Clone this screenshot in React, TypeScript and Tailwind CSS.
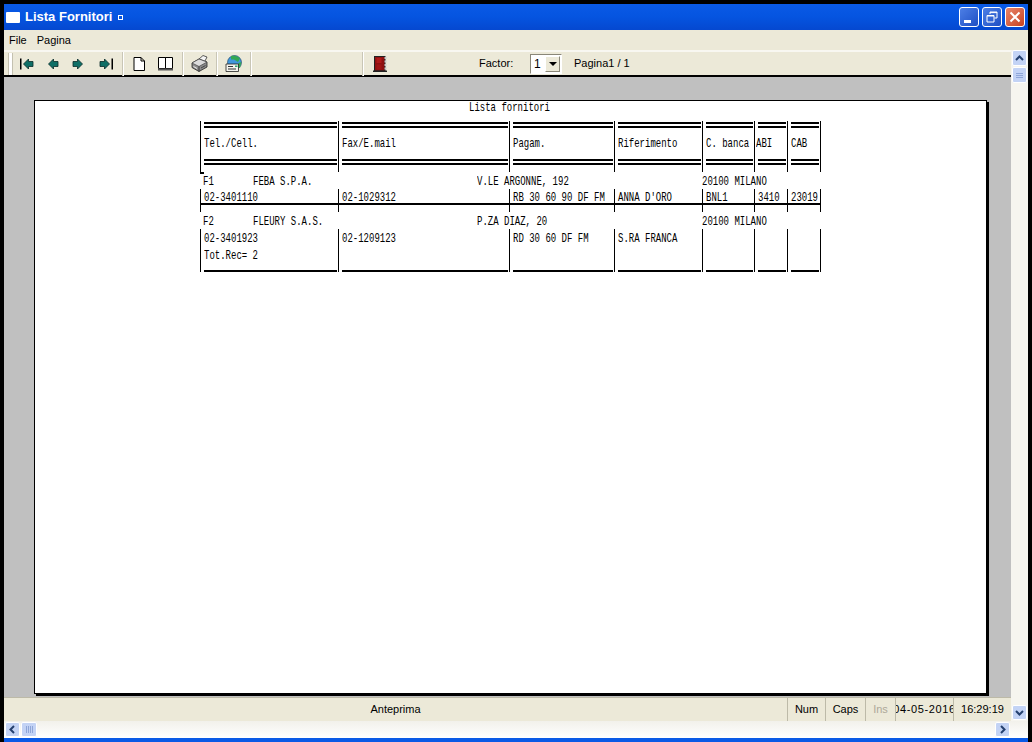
const ui = "[font-family:'Liberation_Sans',Arial,sans-serif]"

const columns = 'grid grid-cols-[138px_171px_105px_88px_52px_33px_33px]'

const headers = ['Tel./Cell.', 'Fax/E.mail', 'Pagam.', 'Riferimento', 'C. banca', 'ABI', 'CAB']
const row1 = ['02-3401110', '02-1029312', 'RB 30 60 90 DF FM', "ANNA D'ORO", 'BNL1', '3410', '23019']
const row2 = ['02-3401923', '02-1209123', 'RD 30 60 DF FM', 'S.RA FRANCA', '', '', '']

// report text: the preview squeezes a fixed pitch font, so it stays narrow and tall
function Print({ children, className }: { children?: React.ReactNode; className?: string }) {
  return (
    <div className={`h-[13px] scale-y-[1.35] whitespace-nowrap font-['Liberation_Mono'] text-[9px] leading-[13px] text-black ${className ?? ''}`}>
      {children}
    </div>
  )
}

function DoubleLine() {
  return (
    <div className="ml-[3px] mr-px flex flex-col gap-[2px]">
      <div className="h-[2px] bg-black" />
      <div className="h-[2px] bg-black" />
    </div>
  )
}

function HeaderRow() {
  return (
    <div className={`${columns} h-[51px] border-r border-black`}>
      {headers.map((h, i) => (
        <div key={h} className="flex flex-col border-l border-black pt-px">
          <DoubleLine />
          <Print className={`mt-[10px] ${i === 4 ? 'pl-[3px]' : i === 5 ? 'pl-px' : 'pl-[3px]'}`}>{h}</Print>
          <div className="mt-[8px]">
            <DoubleLine />
          </div>
        </div>
      ))}
    </div>
  )
}

function AddressRow({ code, name, street, city }: { code: string; name: string; street: string; city: string }) {
  return (
    <div className="grid h-[17px] grid-cols-[53px_224px_225px_1fr] pt-[4px]">
      <Print className="pl-[3px]">{code}</Print>
      <Print>{name}</Print>
      <Print>{street}</Print>
      <Print>{city}</Print>
    </div>
  )
}

function Spacer() {
  return (
    <div className={`${columns} h-[7px] border-r border-black`}>
      {headers.map((h) => (
        <div key={h} className="border-l border-black" />
      ))}
    </div>
  )
}

function Sheet() {
  return (
    <div className="h-[594px] w-[953px] border border-black bg-white shadow-[2px_2px_0_0_#000]">
      <div className="pt-px">
        <Print className="pl-[434px]">Lista fornitori</Print>
      </div>
      <div className="relative ml-[165px] mt-[6px] w-[621px]">
        <HeaderRow />
        <div className="absolute left-0 top-[51px] h-[2px] w-[4px] bg-black" />
        <AddressRow code="F1" name="FEBA S.P.A." street="V.LE ARGONNE, 192" city="20100 MILANO" />
        <div className={`${columns} h-[16px] border-b-2 border-r border-black`}>
          {row1.map((t, i) => (
            <div key={i} className="border-l border-black pl-[3px] pt-[2px]">
              <Print className="translate-y-px">{t}</Print>
            </div>
          ))}
        </div>
        <Spacer />
        <AddressRow code="F2" name="FLEURY S.A.S." street="P.ZA DIAZ, 20" city="20100 MILANO" />
        <div className={`${columns} h-[43px] border-r border-black`}>
          {row2.map((t, i) => (
            <div key={i} className="relative border-l border-black pl-[3px] pt-[4px]">
              <Print>{t}</Print>
              {i === 0 && <Print className="mt-[4px]">Tot.Rec= 2</Print>}
              <div className="absolute bottom-0 left-[3px] right-px h-[2px] bg-black" />
            </div>
          ))}
        </div>
      </div>
    </div>
  )
}

function NavIcon({ dir, bar }: { dir: 'l' | 'r'; bar?: boolean }) {
  return (
    <svg width="14" height="12" viewBox="0 0 14 12" className={dir === 'r' ? '-scale-x-100' : ''}>
      {bar && <rect x="0" y="0.5" width="1.5" height="11" fill="#000" />}
      <path d="M3.5 6 L8.5 1 V3.5 H13 V8.5 H8.5 V11 Z" fill="#0f6f66" stroke="#0a2a28" strokeWidth="0.8" />
    </svg>
  )
}

function PageIcon() {
  return (
    <svg width="12" height="14" viewBox="0 0 12 14">
      <path d="M1 .5H8L11.5 4V13.5H1Z M8 .5V4H11.5" fill="#fff" stroke="#000" strokeWidth="1" />
    </svg>
  )
}

function BookIcon() {
  return (
    <svg width="15" height="14" viewBox="0 0 15 14">
      <path d="M.5 .5H7.5V11.5H.5Z M7.5 .5H14.5V11.5H7.5Z" fill="#fff" stroke="#000" strokeWidth="1" />
      <rect x="0" y="11.5" width="15" height="2" fill="#555" />
    </svg>
  )
}

function PrinterIcon() {
  return (
    <svg width="17" height="17" viewBox="0 0 17 17">
      <path d="M7 5 L12 .5 L16 2 L13 8Z" fill="#f4f4f4" stroke="#333" strokeWidth="0.8" />
      <path d="M1 8 L8 4 L16 7 V12 L8 16.5 L1 12.5Z" fill="#8c8c8c" stroke="#222" strokeWidth="0.8" />
      <path d="M1 8 L8 11.5 L16 7 L8 4Z" fill="#dcdcdc" stroke="#444" strokeWidth="0.7" />
      <path d="M8 11.5V16.5" stroke="#222" strokeWidth="0.8" />
      <path d="M2.5 11.5 L6 13.5" stroke="#eee" strokeWidth="1" />
      <path d="M10 13 L14.5 10.5" stroke="#444" strokeWidth="1" />
    </svg>
  )
}

function GlobeIcon() {
  return (
    <svg width="17" height="18" viewBox="0 0 17 18">
      <circle cx="9.5" cy="7.5" r="7" fill="#3f97dc" stroke="#1a3a55" strokeWidth="0.6" />
      <path d="M6 1.2 C9 .3 13 1.2 15 3.5 L13 7 L9 4.5 L6 4.5Z M13.5 8 L16.3 7 L15 13 L12.5 12Z" fill="#34a853" />
      <path d="M1 9H13.5V16.5H1Z" fill="#f4f4ee" stroke="#222" strokeWidth="0.8" />
      <path d="M3 11.5H8 M3 14H11" stroke="#333" strokeWidth="1" />
      <rect x="10" y="10.5" width="2.5" height="1.5" fill="#3a7" />
    </svg>
  )
}

function DoorIcon() {
  return (
    <svg width="14" height="16" viewBox="0 0 14 16">
      <rect x="1.5" y="0.5" width="10.5" height="14.5" fill="#8e1010" stroke="#222" strokeWidth="1" />
      <rect x="3.5" y="2" width="5" height="5" fill="#b01818" />
      <rect x="3.5" y="8.5" width="5" height="5" fill="#a01414" />
      <path d="M12.5 1V15" stroke="#ccc" strokeWidth="2" strokeDasharray="2 1.5" />
      <rect x="0" y="14.5" width="14" height="1.5" fill="#222" />
    </svg>
  )
}

function Sep() {
  return <div className="h-[24px] w-[2px] border-l border-r border-l-[#c9c6b6] border-r-white" />
}

function Toolbar() {
  return (
    <div className="flex h-[27px] items-center border-t-2 border-t-[#f8f7f1] border-b-2 border-b-black bg-[#ece9d8] pl-1">
      <div className="h-[22px] w-[5px] border-l border-r border-l-[#c4c1b0] border-r-[#c4c1b0] bg-white" />
      <div className="ml-[7px] flex w-[25px]"><NavIcon dir="l" bar /></div>
      <div className="flex w-[27px]"><NavIcon dir="l" /></div>
      <div className="flex w-[27px]"><NavIcon dir="r" /></div>
      <div className="flex w-[23px]"><NavIcon dir="r" bar /></div>
      <Sep />
      <div className="ml-[9px] flex w-[25px]"><PageIcon /></div>
      <div className="flex w-[23px]"><BookIcon /></div>
      <div className="ml-[1px]"><Sep /></div>
      <div className="ml-[7px] flex w-[25px]"><PrinterIcon /></div>
      <Sep />
      <div className="ml-[7px] flex w-[25px]"><GlobeIcon /></div>
      <Sep />
      <div className="ml-[110px]"><Sep /></div>
      <div className="ml-[9px] flex w-[106px]"><DoorIcon /></div>
      <span className={`${ui} w-[51px] text-[11px] text-black`}>Factor:</span>
      <div className="flex h-[20px] w-[32px] items-center justify-between border border-t-[#8a8778] border-l-[#8a8778] border-r-white border-b-white bg-white pl-[3px] pr-px">
        <span className={`${ui} text-[12px] text-black`}>1</span>
        <div className="flex h-[16px] w-[15px] items-center justify-center border border-t-white border-l-white border-r-[#8a8778] border-b-[#8a8778] bg-[#ece9d8]">
          <div className="h-0 w-0 border-x-[4px] border-t-[4px] border-x-transparent border-t-black" />
        </div>
      </div>
      <span className={`${ui} ml-[12px] text-[11px] text-black`}>Pagina1 / 1</span>
    </div>
  )
}

function StatusCell({ w, text, className }: { w: string; text: string; className?: string }) {
  return (
    <div className={`${w} flex items-center justify-center overflow-hidden whitespace-nowrap border-l border-l-[#bdbaa8] ${className ?? 'text-black'}`}>
      {text}
    </div>
  )
}

function ScrollBtn({ children, className }: { children: React.ReactNode; className?: string }) {
  return (
    <div className={`flex items-center justify-center rounded-[2px] border border-white bg-[#c3d3f5] ${className ?? ''}`}>
      {children}
    </div>
  )
}

function Chevron({ rotate }: { rotate: string }) {
  return (
    <svg width="9" height="9" viewBox="0 0 9 9" className={rotate}>
      <path d="M1 6 L4.5 2.5 L8 6" fill="none" stroke="#24406f" strokeWidth="2" />
    </svg>
  )
}

export default function App() {
  return (
    <div className="flex h-[742px] w-[1032px] flex-col overflow-hidden bg-black pl-1 pr-1 pt-1">
      {/* title bar */}
      <div className="flex h-[26px] shrink-0 items-center bg-gradient-to-b from-[#0a5ae6] via-[#0554e0] to-[#0548d0] pl-[2px] pr-[3px]">
        <div className="h-[11px] w-[14px] rounded-[1px] bg-white" />
        <span className={`${ui} ml-[5px] text-[13px] font-bold text-white`}>Lista Fornitori</span>
        <div className="ml-[6px] h-[5px] w-[5px] border border-white" />
        <div className="ml-auto flex gap-[3px]">
          <div className="flex h-[20px] w-[20px] items-end rounded-[3px] border border-white bg-gradient-to-br from-[#4d7fe6] to-[#1f4fc4] pb-[3px] pl-[4px]">
            <div className="h-[3px] w-[7px] bg-white" />
          </div>
          <div className="flex h-[20px] w-[20px] items-center justify-center rounded-[3px] border border-white bg-gradient-to-br from-[#4d7fe6] to-[#1f4fc4]">
            <svg width="12" height="12" viewBox="0 0 12 12">
              <path d="M4 3V1H11V7H8.5 M1 4.5H8V11H1Z M4 1.6H11 M1 5H8" fill="none" stroke="#fff" strokeWidth="1" />
            </svg>
          </div>
          <div className="flex h-[20px] w-[20px] items-center justify-center rounded-[3px] border border-white bg-gradient-to-br from-[#e8856a] to-[#c8401c]">
            <svg width="12" height="12" viewBox="0 0 12 12">
              <path d="M1.5 1.5L10.5 10.5M10.5 1.5L1.5 10.5" stroke="#fff" strokeWidth="2" />
            </svg>
          </div>
        </div>
      </div>

      {/* menu */}
      <div className={`${ui} flex h-[20px] shrink-0 items-center gap-[10px] bg-[#ece9d8] pl-[5px] text-[11px] text-black`}>
        <span>File</span>
        <span>Pagina</span>
      </div>

      <div className="flex min-h-0 flex-1">
        <div className="flex w-[1007px] flex-col">
          <Toolbar />
          <div className="flex-1 bg-[#c0c0c0] pl-[30px] pt-[23px]">
            <Sheet />
          </div>
          <div className={`${ui} flex h-[24px] shrink-0 border-t border-t-[#bdbaa8] bg-[#ece9d8] text-[11px]`}>
            <div className="flex w-[783px] items-center justify-center text-black">Anteprima</div>
            <StatusCell w="w-[38px]" text="Num" />
            <StatusCell w="w-[40px]" text="Caps" />
            <StatusCell w="w-[30px]" text="Ins" className="text-[#aca899]" />
            <StatusCell w="w-[58px]" text="04-05-2016" className="tracking-[0.6px] text-black" />
            <StatusCell w="w-[58px]" text="16:29:19" />
          </div>
        </div>
        <div className="flex w-[17px] flex-col items-center bg-[#f6f5ef]">
          <ScrollBtn className="h-[16px] w-[15px]"><Chevron rotate="" /></ScrollBtn>
          <ScrollBtn className="mt-px h-[16px] w-[15px] flex-col gap-px">
            <div className="h-px w-[7px] bg-[#8fa6d8]" />
            <div className="h-px w-[7px] bg-[#8fa6d8]" />
            <div className="h-px w-[7px] bg-[#8fa6d8]" />
          </ScrollBtn>
          <ScrollBtn className="mt-auto mb-px h-[15px] w-[15px]"><Chevron rotate="rotate-180" /></ScrollBtn>
        </div>
      </div>

      {/* horizontal scrollbar */}
      <div className="flex h-[17px] shrink-0 items-center bg-gradient-to-b from-[#f2f1eb] to-white pl-px">
        <ScrollBtn className="h-[15px] w-[15px]"><Chevron rotate="-rotate-90" /></ScrollBtn>
        <ScrollBtn className="ml-px h-[15px] w-[16px] gap-px">
          <div className="h-[7px] w-px bg-[#8fa6d8]" />
          <div className="h-[7px] w-px bg-[#8fa6d8]" />
          <div className="h-[7px] w-px bg-[#8fa6d8]" />
          <div className="h-[7px] w-px bg-[#8fa6d8]" />
        </ScrollBtn>
        <ScrollBtn className="ml-[958px] h-[15px] w-[15px]"><Chevron rotate="rotate-90" /></ScrollBtn>
      </div>
      <div className="h-[4px] shrink-0 bg-[#0a5ae6]" />
    </div>
  )
}
